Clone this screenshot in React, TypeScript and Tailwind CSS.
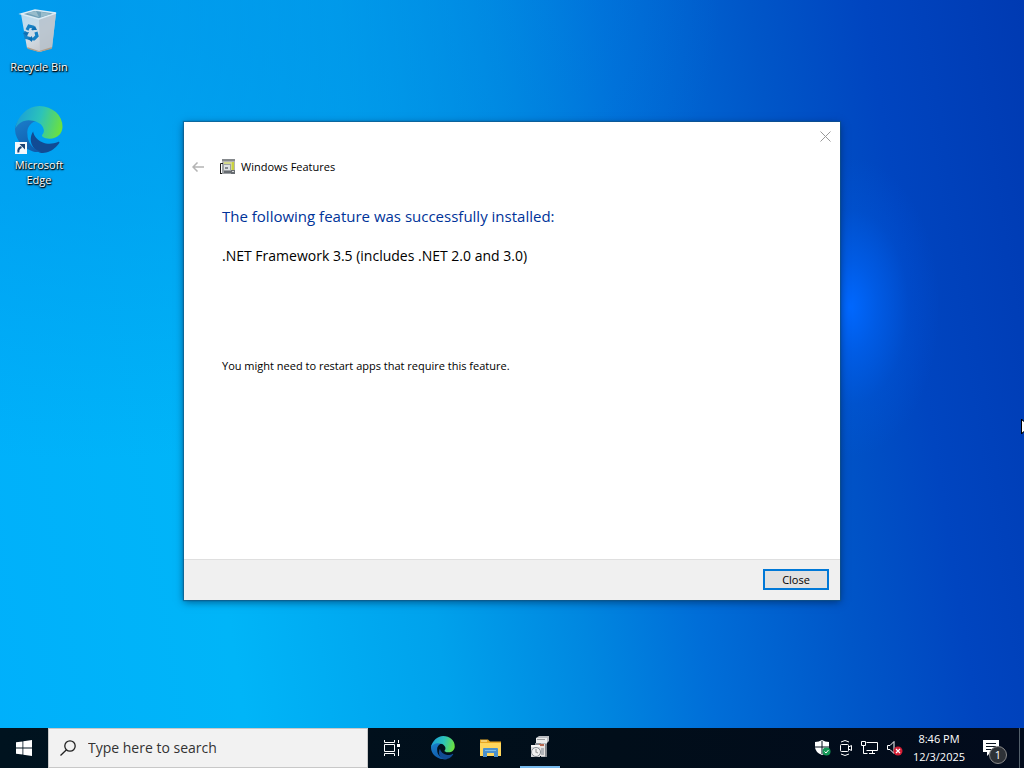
import { useState, type ReactNode } from "react";

function RecycleBinIcon() {
  return (
    <svg width="48" height="48" viewBox="0 0 48 48" aria-hidden="true">
      <defs>
        <linearGradient id="bin-front" x1="0" y1="0" x2="0.6" y2="1">
          <stop offset="0" stopColor="#b3daf0" />
          <stop offset="0.6" stopColor="#d3dde6" />
          <stop offset="1" stopColor="#c6c6ca" />
        </linearGradient>
      </defs>
      <path d="M6 6l18 5 17-6-4 35-13 4-12-4z" fill="url(#bin-front)" />
      <path d="M24 11l17-6-4 35-12 4z" fill="#b5c0ca" opacity="0.8" />
      <path d="M6 6l14-4 21 3-17 6z" fill="#6fa0b8" stroke="#dcecf5" strokeWidth="1.4" />
      <path d="M12 5l9-2 3 6zM26 4l11 2-11 3z" fill="#98bccb" />
      <path d="M12 39l12 4 13-4-.5 2-12.500 3-11-3z" fill="#b09c86" />
      <g fill="none" stroke="#1680c4" strokeWidth="3.2">
        <path d="M12 22l2-4 4 1 1 3" />
        <path d="M21 24l1 4-3 3h-2" />
        <path d="M15 30.500l-4-1-1-4 1-2" />
      </g>
      <path d="M16 22h6l-2-4zM17 28v6l-4-3zM8 25l6-1-2 4z" fill="#0d6fb4" />
    </svg>
  );
}

function EdgeIcon({ size, id }: { size: number; id: string }) {
  return (
    <svg width={size} height={size} viewBox="0 0 24 24" aria-hidden="true">
      <defs>
        <linearGradient id={`${id}-top`} x1="0" y1="0.4" x2="1" y2="0.6">
          <stop offset="0" stopColor="#1a9fd8" />
          <stop offset="0.5" stopColor="#2cc3b9" />
          <stop offset="1" stopColor="#6ee23a" />
        </linearGradient>
        <linearGradient id={`${id}-left`} x1="0.2" y1="0" x2="0.6" y2="1">
          <stop offset="0" stopColor="#1b7fcc" />
          <stop offset="1" stopColor="#0f5cac" />
        </linearGradient>
      </defs>
      <path
        d="M21.86 17.86q.14 0 .25.12.1.13.1.25t-.11.33l-.32.46-.43.53-.44.5q-.26.25-.38.37l-.22.23q-.58.53-1.34 1.04-.76.51-1.6.91-.86.4-1.74.64t-1.67.24q-.9 0-1.69-.28-.8-.28-1.48-.78-.68-.5-1.22-1.17-.53-.66-.92-1.44-.38-.77-.58-1.6-.2-.83-.2-1.67 0-1 .32-1.96.33-.97.87-1.8.14.95.55 1.77.41.82 1.02 1.5.6.68 1.38 1.21.78.54 1.64.9.86.36 1.77.56.92.2 1.8.2 1.12 0 2.18-.24 1.06-.23 2.06-.72l.2-.1.2-.05z"
        fill="#114b94"
      />
      <path
        d="M6.23 14.27q0 1.1.27 2.14.27 1.04.78 1.96.5.93 1.23 1.74.73.8 1.64 1.42.91.62 1.96 1.02.36.13.75.22-1.98.44-3.86-.06-2.8-.77-5-2.65Q2 18.4 1 15.9 0 13.7 0 11.75q0-1.4.55-2.63.55-1.23 1.48-2.14.93-.9 2.12-1.43Q5.35 5 6.680 5q2.6-.02 4.6 1.12 1.3.75 2.2 2.05-.9-.7-2.07-.7-.87 0-1.66.3-.8.32-1.44.87-.64.56-1.14 1.27-.5.7-.82 1.55Q6 12.9 6.23 14.27z"
        fill={`url(#${id}-left)`}
      />
      <path
        d="M23.75 10.4q0 1.26-.48 2.36-.48 1.1-1.35 1.91-.87.8-2.05 1.25-1.18.44-2.56.44-1.1 0-1.94-.22-.84-.23-1.38-.58-.53-.35-.53-.78 0-.16.1-.3.1-.13.26-.31.25-.3.44-.76.19-.45.19-1.05 0-.84-.42-1.67-.42-.85-1.16-1.53-.73-.67-1.72-1.09-1-.42-2.15-.64-1.7-.4-3.3-.18-1.68.24-3.15 1.24Q1.15 9.4.16 11.1.55 8.8 1.62 6.82q1.07-1.98 2.7-3.5Q5.93 1.8 7.94.9 9.94 0 12.22 0q2.4 0 4.52.82 2.11.82 3.7 2.24 1.58 1.42 2.45 3.3.86 1.88.86 4.04z"
        fill={`url(#${id}-top)`}
      />
    </svg>
  );
}

function FeaturesIcon() {
  return (
    <svg width="16" height="16" viewBox="0 0 16 16" aria-hidden="true">
      <path d="M2 0h13v13H2z" fill="#b4b4b2" />
      <path d="M2 0h13v2H2z" fill="#85898c" />
      <path d="M4 3h10v9H4z" fill="#d4d98a" />
      <path d="M12 3h2v9h-2z" fill="#c9d13f" />
      <path d="M.5 15V4.500H3" fill="none" stroke="#1c1c1c" />
      <path d="M.5 14.500h3" stroke="#1c1c1c" />
      <path d="M2 5h9v10H2z" fill="#9da1a4" />
      <path d="M4 6h6v5H4z" fill="#dfe2e3" />
      <path d="M5 8h3v2H5z" fill="#84898d" />
      <path d="M4 12h8v2H4zM11 11h4v4h-4z" fill="#676c71" />
      <path d="M12 12h2v1h-2z" fill="#d5d5d5" />
    </svg>
  );
}

function TaskViewIcon() {
  return (
    <svg width="18" height="18" viewBox="0 0 18 18" fill="none" stroke="#fff" aria-hidden="true">
      <path d="M1.500 1v2.500h10V1M1.500 17v-2.500h10V17M1.500 5.500h10v7h-10zM15.500 1v3M15.500 10v7" />
      <path d="M14 5h3v3h-3z" fill="#fff" stroke="none" />
    </svg>
  );
}

function ExplorerIcon() {
  return (
    <svg width="22" height="20" viewBox="0 0 22 20" aria-hidden="true">
      <path d="M0 1.500h8l2 2h11V18H0z" fill="#e8a824" />
      <path d="M1 2.500h6v1H1z" fill="#fff0b0" />
      <path d="M0 5h21v13H0z" fill="#ffd65c" />
      <path d="M3 11q0-1 1-1h13q1 0 1 1v8h-4v-4H7v4H3z" fill="#4a90cc" />
      <path d="M5 12h11v1H5z" fill="#7dbdea" />
    </svg>
  );
}

function InstallerIcon() {
  return (
    <svg width="24" height="24" viewBox="0 0 24 24" aria-hidden="true">
      <path d="M8 3l3-2h10v5l-2 2v14h-6V8H8z" fill="#b9bcc0" />
      <path d="M8 3h11v5H8z" fill="#eceded" />
      <path d="M9 4h8v1H9z" fill="#9a9da0" />
      <path d="M7 8h6v7H7z" fill="#8b8f94" />
      <path d="M11 9h6v12h-6z" fill="#e9e4e2" />
      <path d="M11 9h5v2h-5z" fill="#b86a52" />
      <path d="M17 9h2v13h-2z" fill="#82868b" />
      <path d="M13 13h3v7h-3z" fill="#b1b4b8" />
      <path d="M3 10h9v12H3z" fill="#d6d8da" />
      <path d="M3 10h9v2H3z" fill="#f6f6f6" />
      <circle cx="8" cy="17" r="4.500" fill="#f0f0f0" stroke="#858b91" />
      <path d="M8 14v3l2 1" fill="none" stroke="#a0a0a0" strokeWidth="1.300" />
    </svg>
  );
}

function DefenderIcon() {
  return (
    <svg width="16" height="16" viewBox="0 0 16 16" aria-hidden="true">
      <path d="M7 0q3 2 7 2v5q0 5-7 8Q0 12 0 7V2q4 0 7-2z" fill="#fff" />
      <path d="M7 1v13M0 7h14" stroke="#04101c" />
      <circle cx="11.500" cy="11.500" r="4" fill="#159957" />
      <path d="M9.500 11.500l1.500 1.500 2.500-3" fill="none" stroke="#fff" />
    </svg>
  );
}

function MeetNowIcon() {
  return (
    <svg width="14" height="16" viewBox="0 0 14 16" fill="none" stroke="#fff" aria-hidden="true">
      <path d="M2 2q4-3 8 0M2 14q4 3 8 0M2.500 4.500h6q1 0 1 1v5q0 1-1 1h-6q-1 0-1-1v-5q0-1 1-1zM9.500 7l3-1.500v5l-3-1.500" />
    </svg>
  );
}

function NetworkIcon() {
  return (
    <svg width="17" height="16" viewBox="0 0 17 16" fill="none" stroke="#fff" aria-hidden="true">
      <path d="M5.500 2.500h11v8h-11M8 13.500h6M11.500 10.500v3M.5 1.500h4v4h-4zM2.500 5.500v8h4" />
    </svg>
  );
}

function MutedIcon() {
  return (
    <svg width="17" height="16" viewBox="0 0 17 16" aria-hidden="true">
      <path d="M1.500 5.500h2.500l4-4v12l-4-4H1.500z" fill="none" stroke="#fff" />
      <circle cx="12" cy="11" r="4.500" fill="#d51f35" />
      <path d="M10 9l4 4M14 9l-4 4" stroke="#fff" strokeWidth="1.200" />
    </svg>
  );
}

function NotificationIcon() {
  return (
    <svg width="18" height="18" viewBox="0 0 18 18" aria-hidden="true">
      <path d="M1 1h16v12H9l-4 4v-4H1z" fill="#fff" />
      <path d="M4 4.500h10M4 7.500h10M4 10.500h6" stroke="#0a1420" />
    </svg>
  );
}

function DesktopShortcut({ label, children }: { label: string; children: ReactNode }) {
  return (
    <button className="flex w-[74px] flex-col items-center text-[11px] leading-[15px] text-white [text-shadow:1px_1px_1px_#000,0_1px_2px_#000,0_0_2px_#0008]">
      <span className="relative mb-[3px]">{children}</span>
      <span className="w-[68px]">{label}</span>
    </button>
  );
}

function FeatureDialog({ onClose }: { onClose: () => void }) {
  return (
    <section
      aria-label="Windows Features"
      className="flex w-full max-w-[656px] flex-col bg-white text-black shadow-[0_0_1px_1px_#12547f99,0_2px_8px_#001a4099]"
    >
      <div className="flex h-7 justify-end">
        <button aria-label="Close window" onClick={onClose} className="flex w-[30px] items-center justify-center">
          <svg width="11" height="11" viewBox="0 0 11 11" stroke="#999" aria-hidden="true">
            <path d="M.5.500l10 10M10.500.500l-10 10" />
          </svg>
        </button>
      </div>
      <div className="flex h-[34px] items-center px-2">
        <button aria-label="Back" disabled className="mr-4">
          <svg width="12" height="10" viewBox="0 0 12 10" fill="none" stroke="#b4b4b4" strokeWidth="1.500" aria-hidden="true">
            <path d="M12 5H1M5.500.500 1 5l4.500 4.500" />
          </svg>
        </button>
        <FeaturesIcon />
        <span className="ml-[5px] text-[11px] leading-4">Windows Features</span>
      </div>
      <div className="flex flex-col px-[38px] pt-[22px] pb-[185px]">
        <h1 className="text-[15px] leading-5 text-[#003399]">The following feature was successfully installed:</h1>
        <p className="mt-5 text-[14px] leading-5">.NET Framework 3.5 (includes .NET 2.0 and 3.0)</p>
        <p className="mt-[92px] text-[11px] leading-4">You might need to restart apps that require this feature.</p>
      </div>
      <div className="flex items-start justify-end border-t border-[#dfdfdf] bg-[#f0f0f0] px-[11px] pt-[9px] pb-2.5">
        <button
          onClick={onClose}
          className="h-[21px] w-[66px] border-2 border-[#0078d7] bg-[#e1e1e1] text-[11px] leading-4"
        >
          Close
        </button>
      </div>
    </section>
  );
}

function Taskbar() {
  const [query, setQuery] = useState("");
  return (
    <footer className="flex h-10 shrink-0 bg-[linear-gradient(90deg,#00131f,#010e1a_60%,#020b1c)] text-white">
      <button aria-label="Start" className="flex w-12 items-center justify-center">
        <svg width="16" height="16" viewBox="0 0 16 16" fill="#fff" aria-hidden="true">
          <path d="M0 2.300 6.500 1.400v6.200H0zM7.300 1.300 16 0v7.600H7.300zM0 8.400h6.500v6.200L0 13.700zM7.300 8.400H16V16l-8.700-1.300z" />
        </svg>
      </button>
      <label className="flex w-80 items-center gap-3 border border-[#c8c8c8] bg-[#f2f2f2] px-[11px] text-[#333]">
        <svg width="16" height="16" viewBox="0 0 16 16" fill="none" stroke="#222" strokeWidth="1.300" aria-hidden="true">
          <circle cx="10" cy="6" r="5.200" />
          <path d="M6.500 9.800.5 15.500" />
        </svg>
        <input
          aria-label="Search"
          placeholder="Type here to search"
          value={query}
          onChange={(e) => setQuery(e.target.value)}
          className="min-w-0 flex-1 bg-transparent text-[14px] leading-5 outline-none placeholder:text-[#333]"
        />
      </label>
      <div className="flex flex-1">
        <button aria-label="Task View" className="mr-[3px] flex w-12 items-center justify-center">
          <TaskViewIcon />
        </button>
        <button aria-label="Microsoft Edge" className="flex w-12 items-center justify-center">
          <EdgeIcon size={24} id="edge-task" />
        </button>
        <button aria-label="File Explorer" className="flex w-12 items-center justify-center">
          <ExplorerIcon />
        </button>
        <button aria-label="Windows Features" className="mx-[5px] flex w-10 items-center justify-center border-b-2 border-[#76b9ed]">
          <InstallerIcon />
        </button>
      </div>
      <div className="flex items-center gap-2">
        <DefenderIcon />
        <MeetNowIcon />
        <NetworkIcon />
        <MutedIcon />
      </div>
      <time className="ml-2 flex w-14 flex-col items-center justify-center text-[11px] leading-[18px] whitespace-nowrap">
        <span>8:46 PM</span>
        <span>12/3/2025</span>
      </time>
      <button aria-label="Notifications" className="relative ml-1 flex w-11 items-center justify-center pr-1">
        <NotificationIcon />
        <span className="absolute top-[18px] right-2 flex size-[18px] items-center justify-center rounded-full border border-[#8a8a8a] bg-[#2e3237] text-[11px] leading-4">
          1
        </span>
      </button>
      <button aria-label="Show desktop" className="ml-1 w-[5px] border-l border-[#53606b]" />
    </footer>
  );
}

export default function App() {
  const [open, setOpen] = useState(true);

  return (
    <div className="flex min-h-screen flex-col overflow-hidden bg-[radial-gradient(ellipse_90px_150px_at_83%_40%,#0068ff_0%,#0064f8a0_30%,#0060f030_65%,#0060f000_100%),radial-gradient(ellipse_640px_460px_at_8%_0%,#008be6a0_0%,#0090e870_45%,#0090e800_100%),linear-gradient(81deg,#00b0fb_0%,#00b5f8_22%,#00a2ec_40%,#0087e0_53%,#006ed8_63%,#0056c8_76%,#0045c0_86%,#003ab2_100%)] font-['Open_Sans','Noto_Sans',sans-serif]">
      <main className="relative flex flex-1 items-center justify-center pb-1.5">
        <nav aria-label="Desktop" className="absolute top-2 left-0.5 flex flex-col gap-8">
          <DesktopShortcut label="Recycle Bin">
            <RecycleBinIcon />
          </DesktopShortcut>
          <DesktopShortcut label="Microsoft Edge">
            <EdgeIcon size={48} id="edge-desktop" />
            <svg width="12" height="12" viewBox="0 0 12 12" className="absolute bottom-0 left-0" aria-hidden="true">
              <path d="M0 0h12v12H0z" fill="#f4f8fc" />
              <path d="M3.500 10.500q-1-4 3-5.500" fill="none" stroke="#1b4273" strokeWidth="2" />
              <path d="M4.500 2H10v5.500z" fill="#1b4273" />
            </svg>
          </DesktopShortcut>
        </nav>
        {open && <FeatureDialog onClose={() => setOpen(false)} />}
        <svg width="3" height="16" viewBox="0 0 3 16" className="absolute top-[419px] right-0" aria-hidden="true">
          <path d="M0 0h1l2 2v11l-2 2H0z" fill="#000" />
          <path d="M1 1.500 3 3v9l-2 1.500z" fill="#fff" />
        </svg>
      </main>
      <Taskbar />
    </div>
  );
}
